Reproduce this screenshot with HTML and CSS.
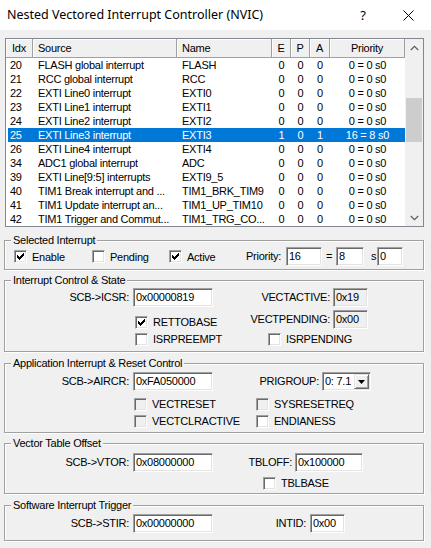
FILE: index.html
```html
<!DOCTYPE html>
<html>
<head>
<meta charset="utf-8">
<title>NVIC</title>
<link rel="stylesheet" href="styles.css">
</head>
<body>
<div class="window">
  <div class="titlebar">
    <div class="title">Nested Vectored Interrupt Controller (NVIC)</div>
    <div class="help">?</div>
    <div class="close"><svg width="11" height="11" viewBox="0 0 11 11"><path d="M0.5 0.5L10.5 10.5M10.5 0.5L0.5 10.5" stroke="#000" stroke-width="1" fill="none"/></svg></div>
  </div>
  <div class="content">
    <div class="list">
      <div class="list-main">
        <div class="hdr">
          <div class="hc hl c1">Idx</div>
          <div class="hc hl">Source</div>
          <div class="hc hl">Name</div>
          <div class="hc">E</div>
          <div class="hc">P</div>
          <div class="hc">A</div>
          <div class="hc">Priority</div>
        </div>
        <div class="rows">
          <div class="row"><span class="ci">20</span><span class="cs">FLASH global interrupt</span><span class="cs">FLASH</span><span class="cc">0</span><span class="cc">0</span><span class="cc">0</span><span class="cc">0 = 0 s0</span></div>
          <div class="row"><span class="ci">21</span><span class="cs">RCC global interrupt</span><span class="cs">RCC</span><span class="cc">0</span><span class="cc">0</span><span class="cc">0</span><span class="cc">0 = 0 s0</span></div>
          <div class="row"><span class="ci">22</span><span class="cs">EXTI Line0 interrupt</span><span class="cs">EXTI0</span><span class="cc">0</span><span class="cc">0</span><span class="cc">0</span><span class="cc">0 = 0 s0</span></div>
          <div class="row"><span class="ci">23</span><span class="cs">EXTI Line1 interrupt</span><span class="cs">EXTI1</span><span class="cc">0</span><span class="cc">0</span><span class="cc">0</span><span class="cc">0 = 0 s0</span></div>
          <div class="row"><span class="ci">24</span><span class="cs">EXTI Line2 interrupt</span><span class="cs">EXTI2</span><span class="cc">0</span><span class="cc">0</span><span class="cc">0</span><span class="cc">0 = 0 s0</span></div>
          <div class="row sel"><span class="ci">25</span><span class="cs">EXTI Line3 interrupt</span><span class="cs">EXTI3</span><span class="cc">1</span><span class="cc">0</span><span class="cc">1</span><span class="cc">16 = 8 s0</span></div>
          <div class="row"><span class="ci">26</span><span class="cs">EXTI Line4 interrupt</span><span class="cs">EXTI4</span><span class="cc">0</span><span class="cc">0</span><span class="cc">0</span><span class="cc">0 = 0 s0</span></div>
          <div class="row"><span class="ci">34</span><span class="cs">ADC1 global interrupt</span><span class="cs">ADC</span><span class="cc">0</span><span class="cc">0</span><span class="cc">0</span><span class="cc">0 = 0 s0</span></div>
          <div class="row"><span class="ci">39</span><span class="cs">EXTI Line[9:5] interrupts</span><span class="cs">EXTI9_5</span><span class="cc">0</span><span class="cc">0</span><span class="cc">0</span><span class="cc">0 = 0 s0</span></div>
          <div class="row"><span class="ci">40</span><span class="cs">TIM1 Break interrupt and ...</span><span class="cs">TIM1_BRK_TIM9</span><span class="cc">0</span><span class="cc">0</span><span class="cc">0</span><span class="cc">0 = 0 s0</span></div>
          <div class="row"><span class="ci">41</span><span class="cs">TIM1 Update interrupt an...</span><span class="cs">TIM1_UP_TIM10</span><span class="cc">0</span><span class="cc">0</span><span class="cc">0</span><span class="cc">0 = 0 s0</span></div>
          <div class="row"><span class="ci">42</span><span class="cs">TIM1 Trigger and Commut...</span><span class="cs">TIM1_TRG_CO...</span><span class="cc">0</span><span class="cc">0</span><span class="cc">0</span><span class="cc">0 = 0 s0</span></div>
        </div>
      </div>
      <div class="vscroll">
        <div class="sb-btn"><svg width="9" height="6" viewBox="0 0 9 6"><path d="M0.8 5L4.5 1.3L8.2 5" stroke="#606060" stroke-width="1.3" fill="none"/></svg></div>
        <div class="sb-track"><div class="sb-thumb"></div></div>
        <div class="sb-btn"><svg width="9" height="6" viewBox="0 0 9 6"><path d="M0.8 1L4.5 4.7L8.2 1" stroke="#606060" stroke-width="1.3" fill="none"/></svg></div>
      </div>
    </div>

    <fieldset class="group g1">
      <legend>Selected Interrupt</legend>
      <div class="grid grid1">
        <div class="chk"><span class="box"><svg class="tick" width="7" height="7" viewBox="0 0 7 7"><path d="M0 2h1v3h-1zM1 3h1v3h-1zM2 4h1v3h-1zM3 3h1v3h-1zM4 2h1v3h-1zM5 1h1v3h-1zM6 0h1v3h-1z" fill="#000"/></svg></span>Enable</div>
        <div class="chk"><span class="box"></span>Pending</div>
        <div class="chk"><span class="box"><svg class="tick" width="7" height="7" viewBox="0 0 7 7"><path d="M0 2h1v3h-1zM1 3h1v3h-1zM2 4h1v3h-1zM3 3h1v3h-1zM4 2h1v3h-1zM5 1h1v3h-1zM6 0h1v3h-1z" fill="#000"/></svg></span>Active</div>
        <div class="lbl-l">Priority:</div>
        <div class="edit">16</div>
        <div class="sep eq">=</div>
        <div class="edit">8</div>
        <div class="sep s">s</div>
        <div class="edit">0</div>
      </div>
    </fieldset>

    <fieldset class="group g2">
      <legend>Interrupt Control &amp; State</legend>
      <div class="grid grid2">
        <div class="lbl">SCB-&gt;ICSR:</div>
        <div class="edit">0x00000819</div>
        <div class="lbl rl">VECTACTIVE:</div>
        <div class="edit ro">0x19</div>

        <div></div>
        <div class="chk end m2"><span class="box"><svg class="tick" width="7" height="7" viewBox="0 0 7 7"><path d="M0 2h1v3h-1zM1 3h1v3h-1zM2 4h1v3h-1zM3 3h1v3h-1zM4 2h1v3h-1zM5 1h1v3h-1zM6 0h1v3h-1z" fill="#000"/></svg></span>RETTOBASE</div>
        <div class="lbl rl end">VECTPENDING:</div>
        <div class="edit ro end">0x00</div>

        <div></div>
        <div class="chk end m2"><span class="box"></span>ISRPREEMPT</div>
        <div class="chk end span2 m55"><span class="box"></span>ISRPENDING</div>
      </div>
    </fieldset>

    <fieldset class="group g3">
      <legend>Application Interrupt &amp; Reset Control</legend>
      <div class="grid grid3">
        <div class="lbl">SCB-&gt;AIRCR:</div>
        <div class="edit">0xFA050000</div>
        <div class="lbl rl">PRIGROUP:</div>
        <div class="combo"><span class="combo-text">0: 7.1</span><span class="combo-btn"><svg width="7" height="4" viewBox="0 0 7 4"><path d="M0 0h7l-3.5 4z" fill="#000"/></svg></span></div>

        <div></div>
        <div class="chk end m1"><span class="box dis"></span>VECTRESET</div>
        <div class="chk end span2 m43"><span class="box dis"></span>SYSRESETREQ</div>

        <div></div>
        <div class="chk end m1"><span class="box dis"></span>VECTCLRACTIVE</div>
        <div class="chk end span2 m43"><span class="box"></span>ENDIANESS</div>
      </div>
    </fieldset>

    <fieldset class="group g4">
      <legend>Vector Table Offset</legend>
      <div class="grid grid4">
        <div class="lbl">SCB-&gt;VTOR:</div>
        <div class="edit">0x08000000</div>
        <div class="lbl rl">TBLOFF:</div>
        <div class="edit">0x100000</div>

        <div></div>
        <div></div>
        <div class="chk end span2 m50"><span class="box"></span>TBLBASE</div>
      </div>
    </fieldset>

    <fieldset class="group g5">
      <legend>Software Interrupt Trigger</legend>
      <div class="grid grid5">
        <div class="lbl">SCB-&gt;STIR:</div>
        <div class="edit">0x00000000</div>
        <div class="lbl rl4">INTID:</div>
        <div class="edit">0x00</div>
      </div>
    </fieldset>
  </div>
</div>
</body>
</html>
```

FILE: styles.css
```css
* { box-sizing: border-box; }

body {
  margin: 0;
  background: #f0f0f0;
  font-family: "Liberation Sans", Arial, sans-serif;
  font-size: 11px;
  letter-spacing: -0.25px;
  color: #000;
}

.window {
  width: 431px;
  height: 548px;
  overflow: hidden;
  background: #f0f0f0;
}

/* title bar */
.titlebar {
  height: 30px;
  background: #fff;
  display: flex;
  align-items: center;
  padding-left: 7px;
}
.title {
  flex: 1;
  font-family: "Noto Sans", "Open Sans", sans-serif;
  font-size: 12.5px;
  letter-spacing: 0;
  line-height: 16px;
}
.help {
  width: 10px;
  font-family: "Noto Sans", sans-serif;
  font-size: 13px;
  letter-spacing: 0;
  line-height: 16px;
  text-align: center;
}
.close {
  width: 11px;
  height: 11px;
  margin-left: 35px;
  margin-right: 17px;
  display: flex;
}

.content {
  padding: 8px 7px 0 4px;
}

/* list view */
.list {
  margin-left: 1px;
  width: 419px;
  height: 189px;
  border: 1px solid #828790;
  background: #fff;
  display: flex;
}
.list-main {
  width: 399px;
}
.hdr {
  display: grid;
  grid-template-columns: 27px 144px 95px 19px 19px 20px 75px;
  height: 19px;
}
.hc {
  background: #f0f0f0;
  border-right: 1px solid #a0a0a0;
  border-bottom: 1px solid #a0a0a0;
  box-shadow: inset 1px 1px 0 #fff;
  line-height: 18px;
  text-align: center;
  white-space: nowrap;
}
.hc.hl {
  text-align: left;
  padding-left: 5px;
}
.hc.c1 {
  padding-left: 6px;
}
.rows {
  margin-left: 2px;
}
.row {
  display: grid;
  grid-template-columns: 25px 144px 95px 19px 19px 20px 75px;
  height: 14px;
  line-height: 14px;
  white-space: nowrap;
}
.row > span {
  overflow: hidden;
}
.row .ci { padding-left: 2px; }
.row .cs { padding-left: 5px; }
.row .cc { text-align: center; }
.row.sel {
  background: #0078d7;
  color: #fff;
}

.vscroll {
  width: 18px;
  background: #f0f0f0;
  display: flex;
  flex-direction: column;
}
.sb-btn {
  height: 17px;
  display: flex;
  align-items: center;
  justify-content: center;
}
.sb-track {
  flex: 1;
}
.sb-thumb {
  margin: 42px 1px 0 1px;
  height: 44px;
  background: #cdcdcd;
}

/* group boxes */
.group {
  margin: 0;
  padding: 0;
  min-inline-size: 0;
  width: 420px;
  border: 1px solid #a0a0a0;
  box-shadow: inset 1px 1px 0 #fff, 1px 1px 0 #fff;
}
.group legend {
  margin-left: 6px;
  padding: 0 2px;
  height: 13px;
  line-height: 13px;
  background: #f0f0f0;
}
.g1 { margin-top: 7px; padding: 0 0 3px 0; }
.g2 { margin-top: 4px; padding: 1px 0 5px 0; }
.g3 { margin-top: 5px; padding: 2px 0 4px 0; }
.g4 { margin-top: 4px; padding: 3px 0 3px 0; }
.g5 { margin-top: 5px; padding: 2px 0 7px 0; }

.grid {
  display: grid;
  align-items: center;
}
.grid1 {
  padding-left: 9px;
  grid-template-columns: 78px 77px 77px 40px 36px 14px 28px 13px 26px;
  grid-template-rows: 19px;
}
.grid2 {
  grid-template-columns: 128px 80px 120px 35px;
  grid-template-rows: 19px 22px 17px;
}
.grid3 {
  grid-template-columns: 128px 80px 109px 49px;
  grid-template-rows: 19px 20px 17px;
}
.grid4 {
  grid-template-columns: 128px 80px 82px 68px;
  grid-template-rows: 19px 18px;
}
.grid5 {
  grid-template-columns: 128px 80px 97px 35px;
  grid-template-rows: 19px;
}
.end { align-self: end; }
.span2 { grid-column: span 2; }
.m1 { margin-left: 1px; }
.m2 { margin-left: 2px; }
.m43 { margin-left: 43px; }
.m50 { margin-left: 50px; }
.m55 { margin-left: 55px; }

.lbl {
  text-align: right;
  padding-right: 4px;
  line-height: 19px;
  white-space: nowrap;
}
.lbl.rl { padding-right: 3px; }
.lbl-l { white-space: nowrap; line-height: 19px; }
.rl4 { text-align: right; padding-right: 4px; white-space: nowrap; line-height: 19px; }
.sep { line-height: 19px; }
.sep.eq { padding-left: 4px; }
.sep.s { padding-left: 7px; }

/* edit boxes */
.edit {
  height: 19px;
  line-height: 17px;
  padding-left: 2px;
  background: #fff;
  border: 1px solid;
  border-color: #a0a0a0 #fff #fff #a0a0a0;
  box-shadow: inset 1px 1px 0 #696969, inset -1px -1px 0 #e3e3e3;
  white-space: nowrap;
  overflow: hidden;
}
.edit.ro {
  background: #f0f0f0;
}

/* combo box */
.combo {
  height: 19px;
  display: flex;
  background: #fff;
  border: 1px solid;
  border-color: #a0a0a0 #fff #fff #a0a0a0;
  box-shadow: inset 1px 1px 0 #696969, inset -1px -1px 0 #e3e3e3;
  padding: 1px;
}
.combo-text {
  flex: 1;
  line-height: 15px;
  padding-left: 1px;
  white-space: nowrap;
}
.combo-btn {
  width: 15px;
  background: #f0f0f0;
  border: 1px solid;
  border-color: #e3e3e3 #696969 #696969 #e3e3e3;
  box-shadow: inset 1px 1px 0 #fff, inset -1px -1px 0 #a0a0a0;
  display: flex;
  align-items: center;
  justify-content: center;
}

/* check boxes */
.chk {
  display: flex;
  align-items: center;
  height: 14px;
  white-space: nowrap;
}
.box {
  width: 13px;
  height: 13px;
  margin-right: 5px;
  background: #fff;
  border: 1px solid;
  border-color: #a0a0a0 #fff #fff #a0a0a0;
  box-shadow: inset 1px 1px 0 #696969, inset -1px -1px 0 #e3e3e3;
  display: flex;
  align-items: center;
  justify-content: center;
  flex: none;
}
.box.dis {
  background: #f0f0f0;
}
.tick {
  display: block;
  shape-rendering: crispEdges;
}
```
